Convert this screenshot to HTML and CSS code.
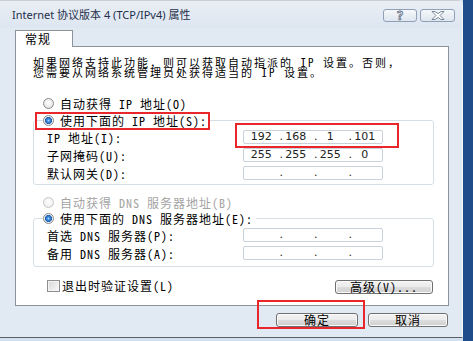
FILE: index.html
```html
<!DOCTYPE html>
<html lang="zh-CN">
<head>
  <meta charset="UTF-8">
  <title>Internet 协议版本 4 (TCP/IPv4) 属性</title>
  <link rel="stylesheet" href="styles.css">
</head>
<body>
  <div class="screen">
    <div class="dialog">
      <div class="titlebar">
        <span class="title">Internet 协议版本 4 (TCP/IPv4) 属性</span>
        <div class="caption-btns">
          <span class="cap-btn help">?</span>
          <span class="cap-btn close">
            <svg width="14" height="9" viewBox="0 0 14 9">
              <polygon points="1,0.5 4,0.5 7,2.6 10,0.5 13,0.5 9,4.5 13,8.5 10,8.5 7,6.4 4,8.5 1,8.5 5,4.5" fill="#fff" stroke="#5b6b82" stroke-width="0.8"/>
            </svg>
          </span>
        </div>
      </div>

      <div class="client">
        <div class="tabs"><span class="tab">常规</span></div>

        <div class="panel">
          <p class="desc">如果网络支持此功能，则可以获取自动指派的 IP 设置。否则，</p>
          <p class="desc">您需要从网络系统管理员处获得适当的 IP 设置。</p>

          <div class="radio-row first"><span class="radio"></span>自动获得 IP 地址(O)</div>

          <fieldset class="group">
            <legend class="radio-row mark mark-radio"><span class="radio on"></span>使用下面的 IP 地址(S):</legend>
            <div class="field-row">
              <span>IP 地址(I):</span>
              <div class="ipbox mark mark-ip">
                <span class="oct"><i class="dot"></i><b>192</b></span>
                <span class="oct"><i class="dot">.</i><b>168</b></span>
                <span class="oct"><i class="dot">.</i><b>1</b></span>
                <span class="oct"><i class="dot">.</i><b>101</b></span>
              </div>
            </div>
            <div class="field-row">
              <span>子网掩码(U):</span>
              <div class="ipbox">
                <span class="oct"><i class="dot"></i><b>255</b></span>
                <span class="oct"><i class="dot">.</i><b>255</b></span>
                <span class="oct"><i class="dot">.</i><b>255</b></span>
                <span class="oct"><i class="dot">.</i><b>0</b></span>
              </div>
            </div>
            <div class="field-row">
              <span>默认网关(D):</span>
              <div class="ipbox">
                <span class="oct"><i class="dot"></i><b></b></span>
                <span class="oct"><i class="dot">.</i><b></b></span>
                <span class="oct"><i class="dot">.</i><b></b></span>
                <span class="oct"><i class="dot">.</i><b></b></span>
              </div>
            </div>
          </fieldset>

          <div class="radio-row disabled"><span class="radio off"></span>自动获得 DNS 服务器地址(B)</div>

          <fieldset class="group dns">
            <legend class="radio-row"><span class="radio on"></span>使用下面的 DNS 服务器地址(E):</legend>
            <div class="field-row">
              <span>首选 DNS 服务器(P):</span>
              <div class="ipbox">
                <span class="oct"><i class="dot"></i><b></b></span>
                <span class="oct"><i class="dot">.</i><b></b></span>
                <span class="oct"><i class="dot">.</i><b></b></span>
                <span class="oct"><i class="dot">.</i><b></b></span>
              </div>
            </div>
            <div class="field-row">
              <span>备用 DNS 服务器(A):</span>
              <div class="ipbox">
                <span class="oct"><i class="dot"></i><b></b></span>
                <span class="oct"><i class="dot">.</i><b></b></span>
                <span class="oct"><i class="dot">.</i><b></b></span>
                <span class="oct"><i class="dot">.</i><b></b></span>
              </div>
            </div>
          </fieldset>

          <div class="check-row">
            <label class="check"><span class="box"></span>退出时验证设置(L)</label>
            <span class="btn advanced">高级(V)...</span>
          </div>
        </div>

        <div class="footer">
          <span class="btn ok mark mark-ok">确定</span>
          <span class="btn cancel">取消</span>
        </div>
      </div>
    </div>
    <div class="edge"></div>
  </div>
</body>
</html>
```

FILE: styles.css
```css
* {
  box-sizing: border-box;
}
body {
  margin: 0;
  width: 473px;
  height: 341px;
  overflow: hidden;
  background: #d3e0ef;
  font-family: "Noto Sans Mono CJK SC", "Noto Sans CJK SC", sans-serif;
  font-size: 12px;
  color: #000;
}
.screen {
  display: flex;
  height: 341px;
}
.dialog {
  width: 463px;
  height: 338px;
  display: flex;
  flex-direction: column;
  background: #e1e9f3;
  border-top: 1px solid #c9ced6;
  border-right: 1px solid #f2f5fa;
  border-bottom: 1px solid #5a5f66;
  border-top-right-radius: 6px;
}
.edge {
  flex: 1;
  background: #1f4c8a;
}

/* title bar */
.titlebar {
  height: 27px;
  display: flex;
  align-items: flex-start;
  justify-content: space-between;
  padding: 0 7px 0 12px;
  background: linear-gradient(#e9eef5, #dde6f1);
}
.title {
  margin-top: 6px;
  line-height: 16px;
  font-family: "Noto Sans", "Noto Sans CJK SC", sans-serif;
  font-size: 11px;
  color: #1e2f4a;
}
.caption-btns {
  display: flex;
  gap: 3px;
  margin-top: 8px;
}
.cap-btn {
  height: 13px;
  display: flex;
  align-items: center;
  justify-content: center;
  border: 1px solid #8e9fb6;
  border-radius: 3px;
  background: linear-gradient(#f5f8fb, #dfe6ef);
}
.help {
  width: 34px;
  font-family: "Noto Sans", sans-serif;
  font-weight: bold;
  font-size: 12px;
  line-height: 11px;
  color: #fff;
  -webkit-text-stroke: 0.8px #5b6b82;
}
.close {
  width: 35px;
}

/* client */
.client {
  flex: 1;
  display: flex;
  flex-direction: column;
  padding: 2px 13px 0 15px;
}
.tabs {
  display: flex;
}
.tab {
  position: relative;
  z-index: 1;
  width: 58px;
  height: 17px;
  margin-bottom: -1px;
  padding-left: 9px;
  line-height: 16px;
  letter-spacing: 1px;
  background: #fff;
  border: 1px solid #8e939b;
  border-bottom: none;
}
.panel {
  height: 260px;
  padding: 10px 14px 0 17px;
  background: #fff;
  border: 1px solid #8e939b;
  letter-spacing: 1px;
}
.desc {
  margin: 0;
  height: 10px;
  font-size: 11px;
  letter-spacing: 2px;
  line-height: 10px;
  white-space: nowrap;
}

/* radios */
.radio-row {
  display: flex;
  align-items: center;
  gap: 6px;
  height: 16px;
  padding-left: 10px;
}
.radio-row.first {
  margin-top: 18px;
  height: 17px;
}
.radio-row.disabled {
  margin-top: 9px;
  color: #a3a3a3;
}
.radio {
  flex: none;
  width: 11px;
  height: 11px;
  border-radius: 50%;
  border: 1px solid #8b8b8b;
  background: radial-gradient(circle at 50% 40%, #fff 0, #ececec 55%, #cfcfcf 100%);
}
.radio.on {
  background: radial-gradient(circle, #a8d6ff 0, #3d8bdb 1.5px, #1d5fae 3.3px, #f4f4f4 3.8px, #d8d8d8 100%);
}
.radio.off {
  border-color: #c6c6c6;
  background: radial-gradient(circle at 50% 40%, #fff 0, #f2f2f2 60%, #e2e2e2 100%);
}

/* groups */
.group {
  margin: 0;
  padding: 0 0 2px 13px;
  border: 1px solid #d5dfe5;
  border-radius: 3px;
}
.group.dns {
  padding-bottom: 4px;
}
.group legend {
  margin-left: -4px;
  padding: 0 3px 0 0;
}
.field-row {
  display: grid;
  grid-template-columns: 196px 140px;
  align-items: center;
  height: 18px;
}
.ipbox {
  display: flex;
  width: 140px;
  height: 14px;
  border: 1px solid #c9d1dc;
  border-radius: 2px;
  background: #fff;
  font-family: "DejaVu Sans", sans-serif;
  font-size: 11px;
  line-height: 12px;
  letter-spacing: 0;
  color: #222;
}
.oct {
  flex: 1;
  display: flex;
}
.oct .dot {
  width: 6px;
  font-style: normal;
  padding-left: 1px;
}
.oct b {
  flex: 1;
  margin-right: 6px;
  font-weight: normal;
  text-align: center;
}

/* bottom of panel */
.check-row {
  display: flex;
  justify-content: space-between;
  align-items: flex-start;
  height: 18px;
  margin-top: 11px;
  padding: 0 1px 0 14px;
}
.check {
  display: flex;
  align-items: center;
  gap: 2px;
  height: 15px;
}
.box {
  width: 13px;
  height: 12px;
  border: 1px solid #8f8f8f;
  background: linear-gradient(135deg, #d6d6d6, #fafafa);
  box-shadow: inset 0 0 0 1px #f4f4f4;
}
.btn {
  display: flex;
  align-items: center;
  justify-content: center;
  height: 14px;
  border: 1px solid #707070;
  border-radius: 3px;
  background: linear-gradient(#f3f3f3 0, #ebebeb 50%, #dddddd 51%, #cfcfcf 100%);
  box-shadow: inset 0 0 0 1px #fbfbfb;
  letter-spacing: 1px;
  line-height: 12px;
}
.advanced {
  width: 98px;
  margin-top: 2px;
}
.footer {
  display: flex;
  justify-content: flex-end;
  gap: 10px;
  padding: 7px 1px 0 0;
  letter-spacing: 1px;
}
.ok {
  width: 82px;
}
.cancel {
  width: 80px;
}

/* red annotation frames */
.mark {
  position: relative;
}
.mark::after {
  content: "";
  position: absolute;
  border: 2px solid #e8262b;
  pointer-events: none;
}
.mark-radio::after {
  inset: 0 0 -2px -8px;
}
.mark-ip::after {
  inset: -8px -17px -5px -9px;
}
.mark-ok::after {
  inset: -14px -8px -3px -20px;
}
```
